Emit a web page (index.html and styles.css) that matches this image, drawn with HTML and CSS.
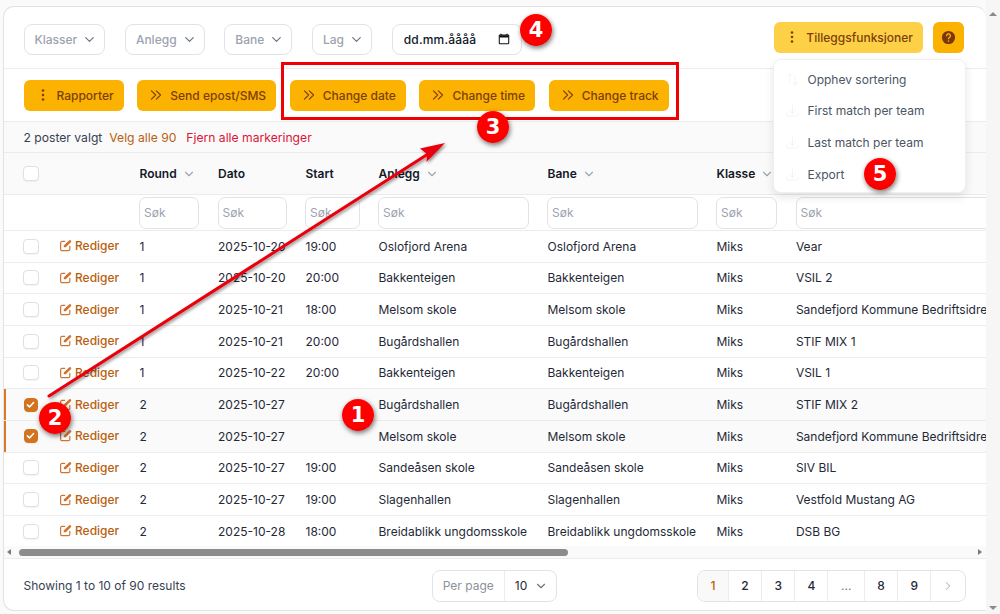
FILE: index.html
```html
<!DOCTYPE html>
<html lang="no">
<head>
<meta charset="utf-8">
<title>Kamper</title>
<link rel="stylesheet" href="styles.css">
</head>
<body>
<svg class="defs" width="0" height="0" aria-hidden="true">
  <symbol id="i-chev" viewBox="0 0 20 20"><path d="M5 7.5l5 5 5-5" fill="none" stroke="currentColor" stroke-width="1.6" stroke-linecap="round" stroke-linejoin="round"/></symbol>
  <symbol id="i-dots" viewBox="0 0 20 20"><g fill="currentColor"><circle cx="10" cy="3.500" r="1.800"/><circle cx="10" cy="10" r="1.800"/><circle cx="10" cy="16.500" r="1.800"/></g></symbol>
  <symbol id="i-dbl" viewBox="0 0 20 20"><path d="M3.500 4L9.500 10l-6 6M10.500 4L16.500 10l-6 6" fill="none" stroke="currentColor" stroke-width="1.600" stroke-linecap="round" stroke-linejoin="round"/></symbol>
  <symbol id="i-edit" viewBox="0 0 24 24"><path d="M10.500 4.500H5.500a2.500 2.500 0 0 0-2.500 2.500V19a2.500 2.500 0 0 0 2.500 2.500H17.500A2.500 2.500 0 0 0 20 19v-5.500" fill="none" stroke="currentColor" stroke-width="2.200" stroke-linecap="round"/><path d="M19 2.200a2.400 2.400 0 0 1 3.300 3.300L12.500 15.300H8.800v-3.500z" fill="currentColor"/></symbol>
  <symbol id="i-down" viewBox="0 0 24 24"><path d="M3 16.500v2.250A2.250 2.250 0 0 0 5.250 21h13.500A2.250 2.250 0 0 0 21 18.750V16.500M16.500 12L12 16.500 7.500 12M12 16.500V3" fill="none" stroke="currentColor" stroke-width="1.500" stroke-linecap="round" stroke-linejoin="round"/></symbol>
  <symbol id="i-sort" viewBox="0 0 24 24"><path d="M3 7.500L7.500 3 12 7.500M7.500 3v13.500M21 16.500L16.500 21 12 16.500M16.500 21V7.500" fill="none" stroke="currentColor" stroke-width="1.500" stroke-linecap="round" stroke-linejoin="round"/></symbol>
  <symbol id="i-check" viewBox="0 0 16 16"><path d="M3.500 8.500l3 3 6-6.500" fill="none" stroke="#fff" stroke-width="2.200" stroke-linecap="round" stroke-linejoin="round"/></symbol>
</svg>

<div class="window">
  <main class="panel">
    <div class="filters">
      <div class="filter">Klasser <svg class="chev"><use href="#i-chev"/></svg></div>
      <div class="filter">Anlegg <svg class="chev"><use href="#i-chev"/></svg></div>
      <div class="filter">Bane <svg class="chev"><use href="#i-chev"/></svg></div>
      <div class="filter">Lag <svg class="chev"><use href="#i-chev"/></svg></div>
      <div class="date">dd.mm.åååå
        <svg class="cal" viewBox="0 0 16 16"><path d="M4 1v2M12 1v2" stroke="#111" stroke-width="1.600"/><rect x="1.700" y="2.700" width="12.600" height="11.600" rx="1" fill="none" stroke="#111" stroke-width="1.400"/><rect x="2" y="3" width="12" height="3" fill="#111"/></svg>
      </div>
      <div class="spacer"></div>
      <button class="btn btn-light"><svg class="ico"><use href="#i-dots"/></svg>Tilleggsfunksjoner</button>
      <button class="btn btn-help">
        <svg class="help" viewBox="0 0 16 16"><circle cx="8" cy="8" r="7" fill="#78350f"/><path d="M5.900 6.100a2.100 2.100 0 1 1 3.200 1.800c-.7.400-1.100.8-1.100 1.500" fill="none" stroke="#fbb000" stroke-width="1.500" stroke-linecap="round"/><circle cx="8" cy="11.700" r=".9" fill="#fbb000"/></svg>
      </button>
    </div>

    <div class="actions">
      <button class="btn"><svg class="ico"><use href="#i-dots"/></svg>Rapporter</button>
      <button class="btn"><svg class="ico"><use href="#i-dbl"/></svg>Send epost/SMS</button>
      <button class="btn"><svg class="ico"><use href="#i-dbl"/></svg>Change date</button>
      <button class="btn"><svg class="ico"><use href="#i-dbl"/></svg>Change time</button>
      <button class="btn"><svg class="ico"><use href="#i-dbl"/></svg>Change track</button>
    </div>

    <div class="status">
      <span>2 poster valgt</span>
      <a class="link-orange">Velg alle 90</a>
      <a class="link-red">Fjern alle markeringer</a>
    </div>

    <div class="table-wrap">
      <table class="grid">
        <colgroup>
          <col class="c-check"><col class="c-edit"><col class="c-round"><col class="c-date"><col class="c-start"><col class="c-venue"><col class="c-venue"><col class="c-class"><col class="c-team">
        </colgroup>
        <thead>
          <tr class="head">
            <th class="cell-check"><span class="box"></span></th><th></th>
            <th>Round <svg class="chev sort"><use href="#i-chev"/></svg></th>
            <th>Dato</th><th>Start</th>
            <th>Anlegg <svg class="chev sort"><use href="#i-chev"/></svg></th>
            <th>Bane <svg class="chev sort"><use href="#i-chev"/></svg></th>
            <th>Klasse <svg class="chev sort"><use href="#i-chev"/></svg></th>
            <th></th>
          </tr>
          <tr class="search">
            <th></th><th></th>
            <th><div class="sok">Søk</div></th><th><div class="sok">Søk</div></th><th><div class="sok">Søk</div></th>
            <th><div class="sok">Søk</div></th><th><div class="sok">Søk</div></th><th><div class="sok">Søk</div></th><th><div class="sok">Søk</div></th>
          </tr>
        </thead>
        <tbody>
          <tr><td class="cell-check"><span class="box"></span></td><td><a class="edit"><svg class="ico-edit"><use href="#i-edit"/></svg>Rediger</a></td><td>1</td><td>2025-10-20</td><td>19:00</td><td>Oslofjord Arena</td><td>Oslofjord Arena</td><td>Miks</td><td>Vear</td></tr>
          <tr><td class="cell-check"><span class="box"></span></td><td><a class="edit"><svg class="ico-edit"><use href="#i-edit"/></svg>Rediger</a></td><td>1</td><td>2025-10-20</td><td>20:00</td><td>Bakkenteigen</td><td>Bakkenteigen</td><td>Miks</td><td>VSIL 2</td></tr>
          <tr><td class="cell-check"><span class="box"></span></td><td><a class="edit"><svg class="ico-edit"><use href="#i-edit"/></svg>Rediger</a></td><td>1</td><td>2025-10-21</td><td>18:00</td><td>Melsom skole</td><td>Melsom skole</td><td>Miks</td><td>Sandefjord Kommune Bedriftsidrettslag</td></tr>
          <tr><td class="cell-check"><span class="box"></span></td><td><a class="edit"><svg class="ico-edit"><use href="#i-edit"/></svg>Rediger</a></td><td>1</td><td>2025-10-21</td><td>20:00</td><td>Bugårdshallen</td><td>Bugårdshallen</td><td>Miks</td><td>STIF MIX 1</td></tr>
          <tr><td class="cell-check"><span class="box"></span></td><td><a class="edit"><svg class="ico-edit"><use href="#i-edit"/></svg>Rediger</a></td><td>1</td><td>2025-10-22</td><td>20:00</td><td>Bakkenteigen</td><td>Bakkenteigen</td><td>Miks</td><td>VSIL 1</td></tr>
          <tr class="selected"><td class="cell-check"><span class="box checked"><svg class="tick"><use href="#i-check"/></svg></span></td><td><a class="edit"><svg class="ico-edit"><use href="#i-edit"/></svg>Rediger</a></td><td>2</td><td>2025-10-27</td><td></td><td>Bugårdshallen</td><td>Bugårdshallen</td><td>Miks</td><td>STIF MIX 2</td></tr>
          <tr class="selected"><td class="cell-check"><span class="box checked"><svg class="tick"><use href="#i-check"/></svg></span></td><td><a class="edit"><svg class="ico-edit"><use href="#i-edit"/></svg>Rediger</a></td><td>2</td><td>2025-10-27</td><td></td><td>Melsom skole</td><td>Melsom skole</td><td>Miks</td><td>Sandefjord Kommune Bedriftsidrettslag</td></tr>
          <tr><td class="cell-check"><span class="box"></span></td><td><a class="edit"><svg class="ico-edit"><use href="#i-edit"/></svg>Rediger</a></td><td>2</td><td>2025-10-27</td><td>19:00</td><td>Sandeåsen skole</td><td>Sandeåsen skole</td><td>Miks</td><td>SIV BIL</td></tr>
          <tr><td class="cell-check"><span class="box"></span></td><td><a class="edit"><svg class="ico-edit"><use href="#i-edit"/></svg>Rediger</a></td><td>2</td><td>2025-10-27</td><td>19:00</td><td>Slagenhallen</td><td>Slagenhallen</td><td>Miks</td><td>Vestfold Mustang AG</td></tr>
          <tr><td class="cell-check"><span class="box"></span></td><td><a class="edit"><svg class="ico-edit"><use href="#i-edit"/></svg>Rediger</a></td><td>2</td><td>2025-10-28</td><td>18:00</td><td>Breidablikk ungdomsskole</td><td>Breidablikk ungdomsskole</td><td>Miks</td><td>DSB BG</td></tr>
        </tbody>
      </table>
    </div>

    <div class="hscroll">
      <span class="arrow-left"></span>
      <div class="track"><div class="thumb"></div></div>
      <span class="arrow-right"></span>
    </div>

    <footer class="foot">
      <div class="results">Showing 1 to 10 of 90 results</div>
      <div class="perpage">
        <span class="pp-label">Per page</span>
        <span class="pp-value">10 <svg class="chev"><use href="#i-chev"/></svg></span>
      </div>
      <nav class="pages">
        <a class="page current">1</a><a class="page">2</a><a class="page">3</a><a class="page">4</a><a class="page wide muted">...</a><a class="page">8</a><a class="page">9</a>
        <a class="page last"><svg class="next" viewBox="0 0 20 20"><path d="M7.500 5l5 5-5 5" fill="none" stroke="currentColor" stroke-width="1.500" stroke-linecap="round" stroke-linejoin="round"/></svg></a>
      </nav>
    </footer>

    <div class="menu">
      <div class="menu-item"><svg class="menu-ico"><use href="#i-sort"/></svg>Opphev sortering</div>
      <div class="menu-item"><svg class="menu-ico"><use href="#i-down"/></svg>First match per team</div>
      <div class="menu-item"><svg class="menu-ico"><use href="#i-down"/></svg>Last match per team</div>
      <div class="menu-item"><svg class="menu-ico"><use href="#i-down"/></svg>Export</div>
    </div>
  </main>

  <aside class="vscroll">
    <span class="arrow-up"></span>
    <span class="arrow-down"></span>
  </aside>
</div>

<div class="annot-rect"></div>
<svg class="annot-arrow" width="1000" height="614" viewBox="0 0 1000 614">
  <defs>
    <filter id="sh" x="-10%" y="-10%" width="120%" height="120%"><feDropShadow dx="1.500" dy="1.500" stdDeviation="1.500" flood-color="#000" flood-opacity=".45"/></filter>
  </defs>
  <g filter="url(#sh)">
    <path d="M49 396L428 154" stroke="#e8000b" stroke-width="3" stroke-linecap="round"/>
    <path d="M445 143L420 148.500 427 154 426.500 162z" fill="#e8000b"/>
  </g>
</svg>
<span class="badge b1">1</span>
<span class="badge b2">2</span>
<span class="badge b3">3</span>
<span class="badge b4">4</span>
<span class="badge b5">5</span>
</body>
</html>
```

FILE: styles.css
```css
* { box-sizing: border-box; }
html, body { margin: 0; height: 100%; overflow: hidden; }
body {
  font-family: Inter, "Liberation Sans", sans-serif;
  font-size: 12px;
  color: #1f2937;
  background: #fafafa;
}
.defs { position: absolute; }
.window { display: flex; height: 614px; padding: 6px 0 3px 3px; }
.panel {
  position: relative;
  width: 983px;
  flex: none;
  background: #fff;
  border: 1.5px solid #e3e3e3;
  border-right: 0;
  border-radius: 11px 11px 0 11px;
  display: flex;
  flex-direction: column;
}
.vscroll { flex: 1; position: relative; background: #f6f6f6; margin: -6px 0 -3px; }

.chev { width: 15px; height: 15px; flex: none; color: #6b7280; }

.filters {
  height: 62px;
  flex: none;
  display: flex;
  align-items: center;
  padding: 0 22px 0 19.500px;
  border-bottom: 1.500px solid #ececec;
}
.filter {
  height: 31px;
  margin-top: 3px;
  display: flex;
  align-items: center;
  gap: 5px;
  padding: 0 7px 0 10px;
  margin-right: 19.700px;
  border: 1.500px solid #e2e3e6;
  border-radius: 8px;
  color: #9ca3af;
  font-weight: 500;
  background: #fff;
}
.date {
  height: 31px;
  width: 130.500px;
  margin-top: 3px;
  display: flex;
  align-items: center;
  justify-content: space-between;
  padding: 0 11px 0 11px;
  border: 1.500px solid #e2e3e6;
  border-radius: 8px;
  color: #111827;
  font-weight: 500;
  letter-spacing: .2px;
}
.cal { width: 12px; height: 12px; }
.spacer { flex: 1; }

.btn {
  height: 31px;
  display: inline-flex;
  align-items: center;
  gap: 7px;
  padding: 0 10px 0 12px;
  border: 0;
  border-radius: 6px;
  background: #fbb200;
  color: #7c3f0c;
  font: 500 12px Inter, "Liberation Sans", sans-serif;
  white-space: nowrap;
}
.ico { width: 14px; height: 14px; flex: none; color: #7c3f0c; }
.btn-light { background: #fed045; margin-right: 10px; margin-top: -1px; padding-left: 11.500px; }
.btn-help { width: 31px; padding: 0; justify-content: center; margin-top: -1px; }
.help { width: 15px; height: 15px; }

.actions {
  height: 53px;
  flex: none;
  display: flex;
  align-items: center;
  gap: 13.700px;
  padding: 0 0 0 19.500px;
  border-bottom: 1.500px solid #ececec;
}

.status {
  height: 31px;
  flex: none;
  display: flex;
  align-items: center;
  padding-left: 19.500px;
  gap: 7px;
  font-size: 12.150px;
  background: #fafafa;
  border-bottom: 1.500px solid #ececec;
  color: #374151;
}
.link-orange { color: #b9600f; }
.link-red { color: #dc1438; margin-left: 3px; }

.table-wrap { flex: none; height: 393px; overflow: hidden; }
.grid { width: 1260px; table-layout: fixed; border-collapse: collapse; }
.c-check { width: 43px; }
.c-edit { width: 83px; }
.c-round { width: 78.500px; }
.c-date { width: 87.500px; }
.c-start { width: 73px; }
.c-venue { width: 169px; }
.c-class { width: 79.400px; }
.c-team { width: 477.600px; }

.grid th, .grid td { padding: 0 9.500px; text-align: left; white-space: nowrap; }
.grid th.cell-check, .grid td.cell-check { padding: 0 0 0 18.500px; line-height: 0; }
.head { height: 41.500px; background: #fafafa; border-bottom: 1.500px solid #ececec; }
.head th { color: #111827; font-weight: 600; }
.sort { color: #9ca3af; width: 14px; height: 14px; vertical-align: -3px; margin-left: 2px; }
.search { height: 36px; border-bottom: 1.500px solid #ececec; }
.search th { font-weight: 400; }
.sok {
  height: 32px;
  display: flex;
  align-items: center;
  margin-left: -.400px;
  padding: 0 4px;
  border: 1.500px solid #e2e3e6;
  border-radius: 7px;
  color: #9ca3af;
  background: #fff;
}
tbody tr { height: 31.670px; border-bottom: 1.500px solid #ececec; }
tbody tr:last-child { border-bottom: 0; }
tbody td { color: #1f2937; }
.selected { background: #fafafa; }
.selected td:first-child { box-shadow: inset 2px 0 0 #d97a24; }

.box {
  display: inline-block;
  width: 16px;
  height: 15px;
  border: 1.500px solid #dfe0e3;
  border-radius: 4px;
  background: #fff;
  box-shadow: 0 1px 1px rgba(0,0,0,.05);
}
.box.checked { background: #d2741f; border-color: #d2741f; width: 14px; height: 14px; margin-left: 1.500px; position: relative; }
.tick { position: absolute; left: 0; top: 0; width: 11px; height: 11px; }
.edit { display: inline-flex; align-items: center; gap: 3.500px; color: #b9600f; font-weight: 500; margin-left: 2px; vertical-align: -1px; }
.ico-edit { width: 13px; height: 13px; color: #cf7330; }

.hscroll {
  height: 13px;
  flex: none;
  display: flex;
  align-items: center;
  background: #fafafa;
  border-bottom: 1.500px solid #ececec;
}
.track { flex: 1; padding: 0 410px 0 8px; }
.thumb { height: 7.500px; border-radius: 4px; background: #8c8c8c; margin-top: 1px; }
.arrow-left, .arrow-right { width: 0; height: 0; border-style: solid; border-width: 3.500px; border-color: transparent; flex: none; }
.arrow-left { border-right: 4px solid #7a7a7a; border-left-width: 0; margin-left: 3px; }
.arrow-right { border-left: 4px solid #7a7a7a; border-right-width: 0; margin-right: 4px; }

.foot {
  flex: 1;
  display: grid;
  grid-template-columns: 1fr auto 1fr;
  align-items: center;
  padding: 2px 20.500px 0 19.500px;
}
.results { color: #374151; }
.perpage {
  height: 32px;
  display: flex;
  align-items: center;
  border: 1.500px solid #e2e3e6;
  border-radius: 8px;
}
.pp-label { padding: 0 10px; color: #8b919c; height: 100%; display: flex; align-items: center; border-right: 1.500px solid #ececec; }
.pp-value { display: flex; align-items: center; gap: 7px; padding: 0 8px 0 10px; color: #1f2937; }
.pp-value .chev { width: 14px; height: 14px; }
.pages {
  justify-self: end;
  height: 32px;
  display: flex;
  border: 1.500px solid #e2e3e6;
  border-radius: 8px;
  overflow: hidden;
}
.page {
  width: 33.200px;
  display: flex;
  align-items: center;
  justify-content: center;
  border-right: 1.500px solid #ececec;
  color: #1f2937;
  font-weight: 500;
}
.page.current { width: 31px; background: #f9f9f9; color: #b9600f; }
.page.wide { width: 36.500px; }
.page.muted { color: #6b7280; font-weight: 400; }
.page.last { border-right: 0; color: #b5b9c0; }
.next { width: 14px; height: 14px; }

.menu {
  position: absolute;
  left: 768.500px;
  top: 52px;
  width: 193px;
  height: 133.500px;
  padding: 3.500px 0;
  background: #fff;
  border: 1px solid #f0f0f0;
  border-radius: 8px;
  box-shadow: 0 4px 10px rgba(0,0,0,.10);
  z-index: 2;
}
.menu-item { height: 31.600px; display: flex; align-items: center; gap: 8px; padding-left: 11px; color: #4b5563; }
.menu-ico { width: 15px; height: 15px; color: #f1f2f4; flex: none; }

.arrow-up, .arrow-down { position: absolute; left: 3px; width: 0; height: 0; border-style: solid; border-color: transparent; border-width: 0 4px; }
.arrow-up { top: 12px; border-bottom: 4px solid #8a8a8a; }
.arrow-down { bottom: 4px; border-top: 4px solid #8a8a8a; }

.annot-rect {
  position: absolute;
  left: 281px;
  top: 62px;
  width: 398px;
  height: 58px;
  border: 3px solid #f00000;
  z-index: 3;
}
.annot-arrow { position: absolute; left: 0; top: 0; pointer-events: none; z-index: 3; }
.badge {
  position: absolute;
  z-index: 4;
  width: 32px;
  height: 32px;
  border-radius: 50%;
  display: flex;
  align-items: center;
  justify-content: center;
  background: radial-gradient(circle at 50% 40%, #ff0000 60%, #d80000 100%);
  color: #fff;
  font: 700 21px "DejaVu Sans", sans-serif;
  box-shadow: 1px 2px 5px rgba(0,0,0,.55);
}
.b1 { left: 342px; top: 399px; }
.b2 { left: 39px; top: 402px; }
.b3 { left: 477px; top: 111px; }
.b4 { left: 520px; top: 14px; }
.b5 { left: 864px; top: 158px; }
```
